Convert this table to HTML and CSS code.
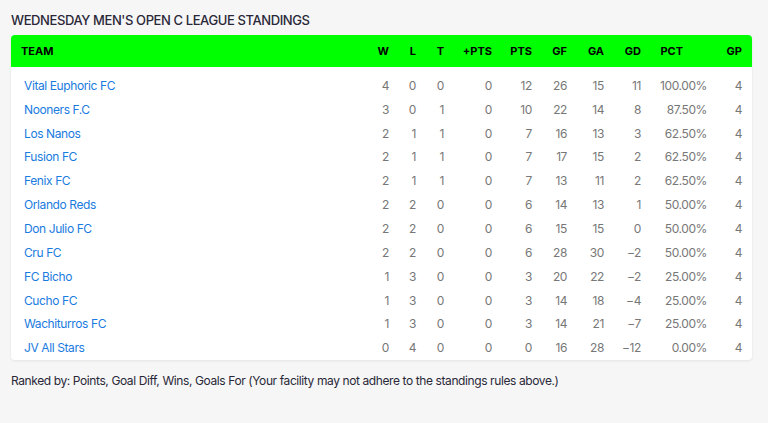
FILE: index.html
```html
<!DOCTYPE html>
<html>
<head>
<meta charset="utf-8">
<link rel="stylesheet" href="styles.css">
</head>
<body>
<div class="page">
  <h2 class="title">WEDNESDAY MEN'S OPEN C LEAGUE STANDINGS</h2>
  <div class="card">
    <table class="standings">
      <colgroup>
        <col class="c-team"><col class="c-w"><col class="c-l"><col class="c-t"><col class="c-xp"><col class="c-pts"><col class="c-gf"><col class="c-ga"><col class="c-gd"><col class="c-pct"><col class="c-gp">
      </colgroup>
      <thead>
        <tr>
          <th class="team">TEAM</th><th>W</th><th>L</th><th>T</th><th>+PTS</th><th>PTS</th><th>GF</th><th>GA</th><th>GD</th><th class="pct">PCT</th><th class="gp">GP</th>
        </tr>
      </thead>
      <tbody>
        <tr class="first"><td class="team"><a href="#">Vital Euphoric FC</a></td><td>4</td><td>0</td><td>0</td><td>0</td><td>12</td><td>26</td><td>15</td><td>11</td><td>100.00%</td><td class="gp">4</td></tr>
        <tr><td class="team"><a href="#">Nooners F.C</a></td><td>3</td><td>0</td><td>1</td><td>0</td><td>10</td><td>22</td><td>14</td><td>8</td><td>87.50%</td><td class="gp">4</td></tr>
        <tr><td class="team"><a href="#">Los Nanos</a></td><td>2</td><td>1</td><td>1</td><td>0</td><td>7</td><td>16</td><td>13</td><td>3</td><td>62.50%</td><td class="gp">4</td></tr>
        <tr><td class="team"><a href="#">Fusion FC</a></td><td>2</td><td>1</td><td>1</td><td>0</td><td>7</td><td>17</td><td>15</td><td>2</td><td>62.50%</td><td class="gp">4</td></tr>
        <tr><td class="team"><a href="#">Fenix FC</a></td><td>2</td><td>1</td><td>1</td><td>0</td><td>7</td><td>13</td><td>11</td><td>2</td><td>62.50%</td><td class="gp">4</td></tr>
        <tr><td class="team"><a href="#">Orlando Reds</a></td><td>2</td><td>2</td><td>0</td><td>0</td><td>6</td><td>14</td><td>13</td><td>1</td><td>50.00%</td><td class="gp">4</td></tr>
        <tr><td class="team"><a href="#">Don Julio FC</a></td><td>2</td><td>2</td><td>0</td><td>0</td><td>6</td><td>15</td><td>15</td><td>0</td><td>50.00%</td><td class="gp">4</td></tr>
        <tr><td class="team"><a href="#">Cru FC</a></td><td>2</td><td>2</td><td>0</td><td>0</td><td>6</td><td>28</td><td>30</td><td>−2</td><td>50.00%</td><td class="gp">4</td></tr>
        <tr><td class="team"><a href="#">FC Bicho</a></td><td>1</td><td>3</td><td>0</td><td>0</td><td>3</td><td>20</td><td>22</td><td>−2</td><td>25.00%</td><td class="gp">4</td></tr>
        <tr><td class="team"><a href="#">Cucho FC</a></td><td>1</td><td>3</td><td>0</td><td>0</td><td>3</td><td>14</td><td>18</td><td>−4</td><td>25.00%</td><td class="gp">4</td></tr>
        <tr><td class="team"><a href="#">Wachiturros FC</a></td><td>1</td><td>3</td><td>0</td><td>0</td><td>3</td><td>14</td><td>21</td><td>−7</td><td>25.00%</td><td class="gp">4</td></tr>
        <tr><td class="team"><a href="#">JV All Stars</a></td><td>0</td><td>4</td><td>0</td><td>0</td><td>0</td><td>16</td><td>28</td><td>−12</td><td>0.00%</td><td class="gp">4</td></tr>
      </tbody>
    </table>
  </div>
  <p class="note">Ranked by: Points, Goal Diff, Wins, Goals For (Your facility may not adhere to the standings rules above.)</p>
</div>
</body>
</html>
```
FILE: styles.css
```css
html, body {
  margin: 0;
  padding: 0;
  background: #f6f6f6;
}
body {
  font-family: "Inter", "Lato", sans-serif;
  color: #2a2838;
  letter-spacing: -0.4px;
}
.page {
  padding: 12px 16px 0 11px;
}
.title {
  margin: 0 0 7px 0;
  font-size: 13px;
  font-weight: 500;
  line-height: 16px;
  color: #2a2838;
}
.card {
  background: #fff;
  border-radius: 4px;
  box-shadow: 0 1px 3px rgba(0,0,0,0.08);
  overflow: hidden;
  width: 741px;
}
.standings {
  width: 741px;
  table-layout: fixed;
  border-collapse: collapse;
}
.c-team { width: 349px; }
.c-w { width: 29px; }
.c-l { width: 27px; }
.c-t { width: 28px; }
.c-xp { width: 48px; }
.c-pts { width: 40px; }
.c-gf { width: 35px; }
.c-ga { width: 37px; }
.c-gd { width: 37px; }
.c-pct { width: 66px; }
.c-gp { width: 45px; }
.standings thead tr {
  background: #00ff00;
  height: 32px;
}
.standings th {
  font-size: 11px;
  font-weight: 700;
  color: #000;
  text-align: right;
  padding: 0;
  letter-spacing: 0;
}
.standings th.team {
  text-align: left;
  padding-left: 10px;
}
.standings th.pct {
  padding-right: 24px;
}
.standings .gp {
  padding-right: 10px;
}
.standings td {
  font-size: 12px;
  color: #777;
  text-align: right;
  padding: 0;
  height: 23.85px;
  line-height: 16px;
}
.standings tbody tr.first td {
  padding-top: 7px;
}
.standings td.team {
  text-align: left;
  padding-left: 13px;
}
.standings td.gp {
  padding-right: 10px;
}
.standings a {
  color: #1a7be0;
  text-decoration: none;
}
.note {
  margin: 13px 0 0 0;
  font-size: 12px;
  line-height: 16px;
  color: #2a2838;
}
```
